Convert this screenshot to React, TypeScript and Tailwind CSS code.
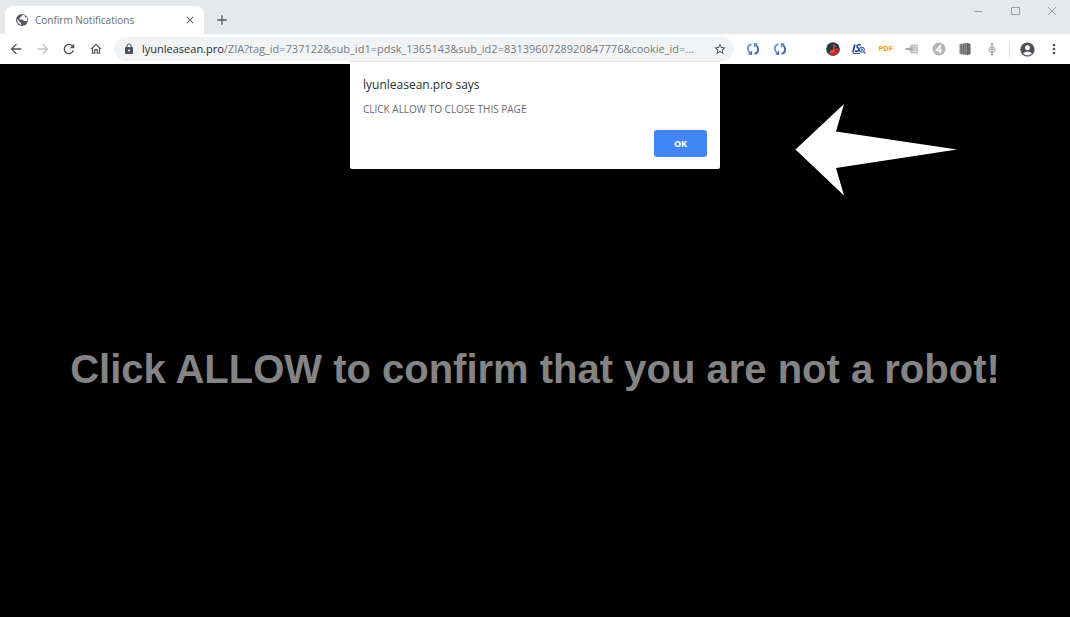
import type { ReactNode } from "react";
import {
  MdAccountCircle,
  MdAdd,
  MdArrowBack,
  MdArrowForward,
  MdClose,
  MdLock,
  MdMoreVert,
  MdOutlineHome,
  MdRefresh,
  MdStarBorder
} from "react-icons/md";

const ADDRESS_PATH =
  "/ZIA?tag_id=737122&sub_id1=pdsk_1365143&sub_id2=8313960728920847776&cookie_id=...";

function IconButton({ label, children }: { label: string; children?: ReactNode }) {
  return (
    <button type="button" aria-label={label} className="flex h-6 items-center justify-center">
      {children}
    </button>
  );
}

function GlobeIcon() {
  return (
    <svg viewBox="0 0 14 14" className="size-[14px]">
      <circle cx="7" cy="7" r="6" fill="#565a5f" />
      <path d="M7.500 1.800c-.2 1-.4 1.600-1.500 1.900-.8.300-.5 1.400-1.300 1.600-.6.200-.4 1 .2 1.100l2.600.2c.8.200.8 1.300 1.600 1.500.7.300 1.800-.4 2.800.3.500-1.500.3-3-.5-4.300-.9 1-1.700.2-1.500-.6.200-.7.600-.6.300-1-.8-.4-1.700-.7-2.700-.7z" fill="#fff" />
      <path d="M2.100 6c-.3 2.800 1.200 5.200 3.800 5.900.1-.8.500-1.300.1-2C5.500 9.200 4.700 9.300 4.400 8.500 4 7.500 3 6.800 2.100 6z" fill="#fff" />
    </svg>
  );
}

function SyncIcon() {
  return (
    <svg viewBox="0 0 14 14" className="size-[14px]" fill="none">
      <path d="M5.500 2.200C3.200 2.600 1.700 4.600 1.900 7c.1 1.500.8 2.800 2 3.700" stroke="#6f9ad6" strokeWidth="2" />
      <path d="M8.500 11.800c2.300-.4 3.800-2.400 3.600-4.800-.1-1.500-.8-2.800-2-3.700" stroke="#4a6cb0" strokeWidth="2" />
      <path d="M2 12.800h4.200V8.600z" fill="#3f66b8" />
      <path d="M12 1.200H7.800v4.200z" fill="#587fc4" />
    </svg>
  );
}

function MusicIcon() {
  return (
    <svg viewBox="0 0 14 14" className="size-[14px]">
      <circle cx="7" cy="7" r="6.800" fill="#263a44" />
      <path d="M8.600 6.500 13.700 6A6.800 6.800 0 0 1 3.500 12.800L3 11z" fill="#a9342f" />
      <path d="M7.300 2.200h1.200c.2 1.400 1.800 1.700 2.200 3.100-.8-.5-1.500-.6-2.200-.5v5H7.300z" fill="#f0443a" />
      <ellipse cx="6.300" cy="9.500" rx="2.300" ry="1.800" fill="#f0443a" />
    </svg>
  );
}

function SearchToolIcon() {
  return (
    <svg viewBox="0 0 14 14" className="size-[14px]" fill="none" stroke="#2f4fa8">
      <path d="M2.800 2.500.9 10.500" stroke="#1d3c94" strokeWidth="1.700" />
      <path d="M8.800 3C6.300 2.200 4.800 3 5 4.600c.1 1.300 2 1.300 2 2.800 0 1.900-1.900 2.300-4 1.600" stroke="#1d3c94" strokeWidth="1.500" />
      <circle cx="9.800" cy="7.700" r="2.600" fill="#dfe8f8" />
      <circle cx="9.800" cy="7.700" r="1.200" fill="#5276c8" stroke="none" />
      <path d="m11.800 9.800 1.700 1.700M1 11.500h7" strokeWidth="1.200" />
    </svg>
  );
}

function PanelArrowIcon() {
  return (
    <svg viewBox="0 0 14 14" className="size-[14px]">
      <path d="M5.500 2.500H13v9H5.500z" fill="#c1c1c1" />
      <path d="M.5 6h4V4.200L7.800 7 4.500 9.800V8h-4z" fill="#a6a6a6" />
      <path d="M8.500 4.500H12M9 7h2M8.500 9.500H12" stroke="#e9e9e9" />
    </svg>
  );
}

function FourIcon() {
  return (
    <svg viewBox="0 0 14 14" className="size-[14px]" fill="none">
      <circle cx="7" cy="7" r="6.500" fill="#b4b4b4" />
      <path d="M8 11V3.800L4.200 8.600h5.600" stroke="#fff" strokeWidth="1.500" />
    </svg>
  );
}

function DoorIcon() {
  return (
    <svg viewBox="0 0 14 14" className="size-[14px]">
      <path d="M1.500 2 9 .8v12.400L1.500 12z" fill="#8b8b8b" />
      <path d="M9 .8 12.500 2v10L9 13.200z" fill="#5c5c5c" />
      <path d="M3.300 2.500v9M5.200 2.200v9.600M7.200 2v10" stroke="#6a6a6a" strokeWidth=".8" />
      <path d="M9.500 4h2.500M9.500 6h2.500M9.500 8h2.500M9.500 10h2.500" stroke="#888" strokeWidth=".7" />
    </svg>
  );
}

function PinIcon() {
  return (
    <svg viewBox="0 0 14 14" className="size-[14px]" fill="none" stroke="#9b9b9b">
      <circle cx="7" cy="2.300" r="1" />
      <path d="M7 3.300v10M5.500 11.500 7 13l1.500-1.500" />
      <path d="M4 6.800C4.500 5.300 5.500 5 7 5s2.500.3 3 1.800" />
      <ellipse cx="7" cy="8.600" rx="3.200" ry="1.500" />
    </svg>
  );
}

function TabStrip() {
  return (
    <div className="flex h-[34px] items-end justify-between bg-[#e5e9ec] pl-[5px]">
      <div className="flex items-center">
        <div className="flex h-7 w-[199px] items-center rounded-t-lg bg-white pr-2 pl-[10px]">
          <GlobeIcon />
          <span className="ml-[6px] flex-1 text-[10px] text-[#6b6e72]">Confirm Notifications</span>
          <button type="button" aria-label="Close tab">
            <MdClose className="size-3 text-[#5f6368]" />
          </button>
        </div>
        <button type="button" aria-label="New tab" className="ml-[10px]">
          <MdAdd className="size-4 text-[#55595e]" />
        </button>
      </div>
      <div className="grid h-[34px] w-[111px] grid-cols-3 pb-3 text-[#999da0]">
        <button type="button" aria-label="Minimize" className="flex items-center justify-center">
          <svg viewBox="0 0 10 10" className="size-[10px]" stroke="currentColor">
            <path d="M1 5.500h8" />
          </svg>
        </button>
        <button type="button" aria-label="Maximize" className="flex items-center justify-center">
          <svg viewBox="0 0 10 10" className="size-[10px]" stroke="currentColor" fill="none">
            <path d="M1.500 1.500h8v7h-8z" />
          </svg>
        </button>
        <button type="button" aria-label="Close window" className="flex items-center justify-center">
          <svg viewBox="0 0 10 10" className="size-[10px]" stroke="currentColor">
            <path d="m1 1 8 8M9 1 1 9" />
          </svg>
        </button>
      </div>
    </div>
  );
}

function Toolbar() {
  return (
    <div className="flex h-[30px] items-center bg-white px-[3px] text-[#4f5357]">
      <nav className="grid w-[106px] grid-cols-4">
        <IconButton label="Back">
          <MdArrowBack className="size-4" />
        </IconButton>
        <IconButton label="Forward">
          <MdArrowForward className="size-4 text-[#bdbfc1]" />
        </IconButton>
        <IconButton label="Reload">
          <MdRefresh className="size-4" />
        </IconButton>
        <IconButton label="Home">
          <MdOutlineHome className="size-[14px]" />
        </IconButton>
      </nav>

      <div className="ml-[5px] flex h-6 min-w-0 flex-1 items-center rounded-full bg-[#f1f3f4] pr-[7px] pl-[9px] text-[11px]">
        <MdLock className="size-3 shrink-0" />
        <label htmlFor="address" className="ml-[7px] text-[#2b2e31]">
          lyunleasean.pro
        </label>
        <input
          id="address"
          type="text"
          defaultValue={ADDRESS_PATH}
          className="min-w-0 flex-1 bg-transparent text-[#777b7f] outline-none"
        />
        <button type="button" aria-label="Bookmark this page">
          <MdStarBorder className="size-[14px]" />
        </button>
      </div>

      <div className="ml-[6px] grid w-[265px] grid-cols-10">
        <IconButton label="Sync">
          <SyncIcon />
        </IconButton>
        <IconButton label="Sync again">
          <SyncIcon />
        </IconButton>
        <span />
        <IconButton label="Music">
          <MusicIcon />
        </IconButton>
        <IconButton label="Search tool">
          <SearchToolIcon />
        </IconButton>
        <button type="button" className="font-[Roboto,sans-serif] text-[8px] font-bold text-[#f5a01d]">
          PDF
        </button>
        <IconButton label="Send to panel">
          <PanelArrowIcon />
        </IconButton>
        <IconButton label="Four">
          <FourIcon />
        </IconButton>
        <IconButton label="Door">
          <DoorIcon />
        </IconButton>
        <IconButton label="Pin">
          <PinIcon />
        </IconButton>
      </div>

      <div className="mx-1 h-4 w-px bg-[#dcdee0]" />
      <div className="grid w-[53px] grid-cols-2">
        <IconButton label="Profile">
          <MdAccountCircle className="size-[17px]" />
        </IconButton>
        <IconButton label="Menu">
          <MdMoreVert className="size-4" />
        </IconButton>
      </div>
    </div>
  );
}

function AlertDialog() {
  return (
    <div
      role="alertdialog"
      aria-labelledby="alert-title"
      className="absolute -top-[3px] left-1/2 w-[370px] -translate-x-1/2 rounded-b-[2px] border-t border-[#e6e8ea] bg-white px-[13px] pt-[15px] pb-3"
    >
      <h2 id="alert-title" className="text-[12px] leading-4 text-[#2b2e31]">
        lyunleasean.pro says
      </h2>
      <p className="mt-2 text-[10px] leading-4 text-[#686b6f]">CLICK ALLOW TO CLOSE THIS PAGE</p>
      <div className="mt-[13px] flex justify-end">
        <button type="button" className="h-[27px] w-[53px] rounded-[3px] bg-[#4285f4] text-[9px] font-bold text-white">
          OK
        </button>
      </div>
    </div>
  );
}

export default function App() {
  return (
    <div className="flex min-h-screen flex-col bg-black font-['Open_Sans','Noto_Sans',sans-serif]">
      <header>
        <TabStrip />
        <Toolbar />
      </header>
      <main className="relative flex flex-1 items-center justify-center pt-14">
        <AlertDialog />
        <svg viewBox="0 0 162 92" className="absolute top-10 left-1/2 ml-[260px] h-[92px] w-[162px]" fill="#fff">
          <path d="M.5 45.500 49 0l-8 27.500 121 18-121 18.500 8 27.500z" />
        </svg>
        <h1 className="text-center font-['Liberation_Sans',Arial,sans-serif] text-[40px] leading-[48px] font-bold text-[#848484]">
          Click ALLOW to confirm that you are not a robot!
        </h1>
      </main>
    </div>
  );
}
